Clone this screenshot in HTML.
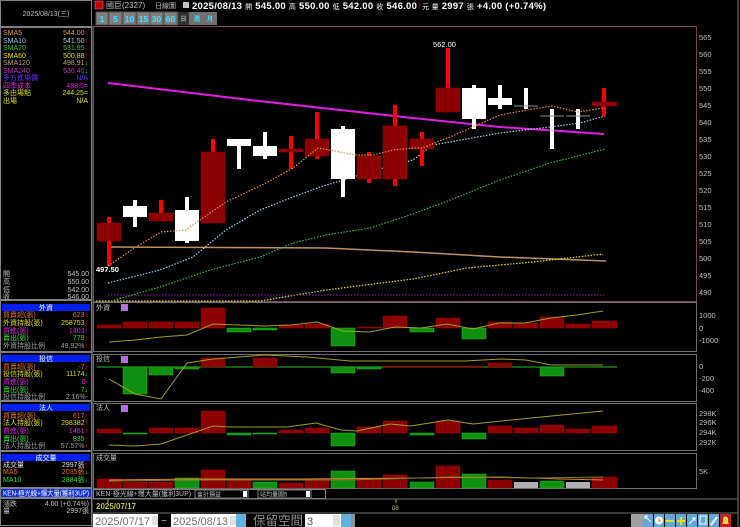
<!DOCTYPE html>
<html><head><meta charset="utf-8"><style>
html,body{margin:0;padding:0;background:#000;width:740px;height:527px;overflow:hidden}
svg{display:block}
text{font-family:"Liberation Sans","Noto Sans CJK TC",sans-serif}
.s{font-size:7px}
</style></head><body>
<svg width="740" height="527" viewBox="0 0 740 527" xmlns="http://www.w3.org/2000/svg">
<rect width="740" height="527" fill="#000"/>
<g fill="none" stroke="#808080" stroke-width="1">
<rect x="0.5" y="0.5" width="91" height="26"/>
<rect x="0.5" y="27.5" width="91" height="272"/>
<rect x="0.5" y="300.5" width="91" height="51"/>
<rect x="0.5" y="352.5" width="91" height="48"/>
<rect x="0.5" y="401.5" width="91" height="49"/>
<rect x="0.5" y="451.5" width="91" height="36"/>
<rect x="0.5" y="488.5" width="91" height="9"/>
<rect x="0.5" y="498.5" width="91" height="27"/>
</g>
<text x="46" y="16" fill="#c0c0c0" class="s" text-anchor="middle">2025/08/13(三)</text>
<g class="s">
<text x="3" y="35" fill="#e0a040">SMA5</text><text x="88" y="35" fill="#e0a040" text-anchor="end">544.00<tspan fill="#f00">↑</tspan></text>
<text x="3" y="43" fill="#a0c8e8">SMA10</text><text x="88" y="43" fill="#a0c8e8" text-anchor="end">541.50<tspan fill="#f00">↑</tspan></text>
<text x="3" y="50" fill="#30c030">SMA20</text><text x="88" y="50" fill="#30c030" text-anchor="end">531.95<tspan fill="#f00">↑</tspan></text>
<text x="3" y="58" fill="#e0e000">SMA60</text><text x="88" y="58" fill="#e0e000" text-anchor="end">500.88<tspan fill="#f00">↑</tspan></text>
<text x="3" y="65" fill="#c0a080">SMA120</text><text x="88" y="65" fill="#c0a080" text-anchor="end">498.91<tspan fill="#0f0">↓</tspan></text>
<text x="3" y="73" fill="#c030c0">SMA240</text><text x="88" y="73" fill="#c030c0" text-anchor="end">536.40<tspan fill="#0f0">↓</tspan></text>
<text x="3" y="80" fill="#6030ff">多方進場價</text><text x="88" y="80" fill="#6030ff" text-anchor="end">N/A</text>
<text x="3" y="88" fill="#e020e0">四季成本</text><text x="88" y="88" fill="#e020e0" text-anchor="end">488.5=</text>
<text x="3" y="95" fill="#e0e000">多由場點</text><text x="88" y="95" fill="#e0e000" text-anchor="end">244.25=</text>
<text x="3" y="103" fill="#e0e000">出場</text><text x="88" y="103" fill="#e0e000" text-anchor="end">N/A</text>

<text x="3" y="276" fill="#c0c0c0">開</text><text x="89" y="276" fill="#c0c0c0" text-anchor="end">545.00</text>
<text x="3" y="284" fill="#c0c0c0">高</text><text x="89" y="284" fill="#c0c0c0" text-anchor="end">550.00</text>
<text x="3" y="292" fill="#c0c0c0">低</text><text x="89" y="292" fill="#c0c0c0" text-anchor="end">542.00</text>
<text x="3" y="299" fill="#c0c0c0">收</text><text x="89" y="299" fill="#c0c0c0" text-anchor="end">546.00</text>

<rect x="2" y="304" width="88" height="7" fill="#0020f0"/><text x="46" y="310" fill="#fff" text-anchor="middle">外資</text>
<text x="3" y="317" fill="#e07030">買賣超(張)</text><text x="88" y="317" fill="#e07030" text-anchor="end">623<tspan fill="#f00">↑</tspan></text>
<text x="3" y="325" fill="#e0e000">外資持股(張)</text><text x="88" y="325" fill="#e0e000" text-anchor="end">258753<tspan fill="#f00">↑</tspan></text>
<text x="3" y="333" fill="#e020e0">買進(張)</text><text x="88" y="333" fill="#e020e0" text-anchor="end">1403<tspan fill="#f00">↑</tspan></text>
<text x="3" y="340" fill="#30e030">賣出(張)</text><text x="88" y="340" fill="#30e030" text-anchor="end">779<tspan fill="#f00">↑</tspan></text>
<text x="3" y="348" fill="#a0a0a0">外資持股比例</text><text x="88" y="348" fill="#a0a0a0" text-anchor="end">49.92%<tspan fill="#f00">↑</tspan></text>

<rect x="2" y="355" width="88" height="7" fill="#0020f0"/><text x="46" y="361" fill="#fff" text-anchor="middle">投信</text>
<text x="3" y="369" fill="#e07030">買賣超(張)</text><text x="88" y="369" fill="#e07030" text-anchor="end">-7<tspan fill="#f00">↑</tspan></text>
<text x="3" y="376" fill="#e0e000">投信持股(張)</text><text x="88" y="376" fill="#e0e000" text-anchor="end">11174<tspan fill="#0f0">↓</tspan></text>
<text x="3" y="384" fill="#e020e0">買進(張)</text><text x="88" y="384" fill="#e020e0" text-anchor="end">0-</text>
<text x="3" y="392" fill="#30e030">賣出(張)</text><text x="88" y="392" fill="#30e030" text-anchor="end">7<tspan fill="#0f0">↓</tspan></text>
<text x="3" y="399" fill="#a0a0a0">投信持股比例</text><text x="88" y="399" fill="#a0a0a0" text-anchor="end">2.16%-</text>

<rect x="2" y="404" width="88" height="7" fill="#0020f0"/><text x="46" y="410" fill="#fff" text-anchor="middle">法人</text>
<text x="3" y="418" fill="#e07030">買賣超(張)</text><text x="88" y="418" fill="#e07030" text-anchor="end">617<tspan fill="#f00">↑</tspan></text>
<text x="3" y="425" fill="#e0e000">法人持股(張)</text><text x="88" y="425" fill="#e0e000" text-anchor="end">298382<tspan fill="#f00">↑</tspan></text>
<text x="3" y="433" fill="#e020e0">買進(張)</text><text x="88" y="433" fill="#e020e0" text-anchor="end">1481<tspan fill="#f00">↑</tspan></text>
<text x="3" y="441" fill="#30e030">賣出(張)</text><text x="88" y="441" fill="#30e030" text-anchor="end">835<tspan fill="#f00">↑</tspan></text>
<text x="3" y="448" fill="#a0a0a0">法人持股比例</text><text x="88" y="448" fill="#a0a0a0" text-anchor="end">57.57%<tspan fill="#f00">↑</tspan></text>

<rect x="2" y="454" width="88" height="7" fill="#0020f0"/><text x="46" y="460" fill="#fff" text-anchor="middle">成交量</text>
<text x="3" y="467" fill="#e0e0e0">成交量</text><text x="88" y="467" fill="#e0e0e0" text-anchor="end">2997張<tspan fill="#f00">↑</tspan></text>
<text x="3" y="474" fill="#e07030">MA5</text><text x="88" y="474" fill="#e07030" text-anchor="end">2035張<tspan fill="#0f0">↓</tspan></text>
<text x="3" y="482" fill="#30e030">MA10</text><text x="88" y="482" fill="#30e030" text-anchor="end">2884張<tspan fill="#0f0">↓</tspan></text>

<rect x="1" y="489" width="90" height="8" fill="#1030e0"/><text x="3" y="495.5" fill="#fff" textLength="86" lengthAdjust="spacingAndGlyphs">KEN-極光線+爆大量(獲利3UP)</text>
<text x="3" y="506" fill="#c0c0c0">漲跌</text><text x="89" y="506" fill="#c0c0c0" text-anchor="end">4.00 (+0.74%)</text>
<text x="3" y="513" fill="#c0c0c0">量</text><text x="89" y="513" fill="#c0c0c0" text-anchor="end">2997張</text>
</g>

<rect x="95" y="1" width="8" height="8" fill="#c00000" stroke="#f88" stroke-width="0.5"/>
<text x="106" y="8" fill="#c0c0c0" style="font-size:8px">國巨(2327)</text>
<text x="155" y="8" fill="#c0c0c0" style="font-size:7px">日線圖</text>
<rect x="183" y="2" width="6" height="6" fill="#c0c0c0"/>
<text x="192" y="9" fill="#fff" style="font-size:9.5px;font-weight:bold" textLength="354" lengthAdjust="spacing">2025/08/13 <tspan style="font-size:7px;font-weight:normal">開</tspan> 545.00 <tspan style="font-size:7px;font-weight:normal">高</tspan> 550.00 <tspan style="font-size:7px;font-weight:normal">低</tspan> 542.00 <tspan style="font-size:7px;font-weight:normal">收</tspan> 546.00<tspan fill="#f00">↑</tspan><tspan style="font-size:7px;font-weight:normal">元  量</tspan> 2997 <tspan style="font-size:7px;font-weight:normal">張</tspan>  +4.00 (+0.74%)</text>
<rect x="96" y="12" width="121" height="13" fill="#707070"/>
<g fill="#40e0ff" style="font-size:8.5px;font-weight:bold" text-anchor="middle">
<rect x="96" y="12" width="12" height="13" fill="#808080" stroke="#555"/>
<rect x="109" y="12" width="13" height="13" fill="#808080" stroke="#555"/>
<rect x="123" y="12" width="13" height="13" fill="#808080" stroke="#555"/>
<rect x="137" y="12" width="13" height="13" fill="#808080" stroke="#555"/>
<rect x="150" y="12" width="13" height="13" fill="#808080" stroke="#555"/>
<rect x="164" y="12" width="13" height="13" fill="#808080" stroke="#555"/>
<rect x="178" y="12" width="11" height="13" fill="#303030"/>
<text x="102" y="22">1</text><text x="115.5" y="22">5</text><text x="129.5" y="22">10</text><text x="143.5" y="22">15</text><text x="156.5" y="22">30</text><text x="170.5" y="22">60</text>
<text x="183.5" y="21" fill="#aaa" style="font-size:6px">日</text><text x="197" y="21" style="font-size:6px">週</text><text x="210" y="21" style="font-size:6px">月</text>
</g>

<rect x="93.5" y="26.5" width="603" height="275" fill="none" stroke="#804060"/>
<line x1="92" y1="26" x2="92" y2="527" stroke="#808080"/>
<line x1="738" y1="0" x2="738" y2="527" stroke="#808080"/>
<g fill="#c0c0c0" style="font-size:7.5px">
<text x="699" y="40">565</text><text x="699" y="57">560</text><text x="699" y="74">555</text><text x="699" y="91">550</text><text x="699" y="108">545</text><text x="699" y="125">540</text><text x="699" y="142">535</text><text x="699" y="159">530</text><text x="699" y="176">525</text><text x="699" y="193">520</text><text x="699" y="210">515</text><text x="699" y="227">510</text><text x="699" y="244">505</text><text x="699" y="261">500</text><text x="699" y="278">495</text><text x="699" y="295">490</text>
</g>

<polyline fill="none" stroke="#e020e0" stroke-width="2" points="108,83 250,100 413,118 500,127 560,131 604,134"/>
<polyline fill="none" stroke="#c09060" stroke-width="1.5" points="108,247 326,248 413,252 500,257 606,261"/>
<polyline fill="none" stroke="#e0e020" stroke-width="1.2" stroke-dasharray="1.5,1.5" points="96,301 260,301 326,290 413,279 467,268 533,262 603,254"/>
<line x1="108" y1="295" x2="604" y2="295" stroke="#a020c0" stroke-dasharray="1.5,1.5"/>
<polyline fill="none" stroke="#30c030" stroke-width="1.2" stroke-dasharray="1.5,1.5" points="108,302 160,287 210,270 260,257 293,243 326,235 370,228 413,214 450,200 500,180 550,163 605,149"/>
<polyline fill="none" stroke="#a0d0f0" stroke-width="1.2" stroke-dasharray="1.5,1.5" points="108,283 160,270 193,257 226,230 260,210 293,197 320,187 343,180 376,170 413,160 433,145 450,142 500,133 550,127 580,123 605,116"/>

<g>
<g fill="#f00">
<rect x="107" y="217" width="4" height="49"/>
<rect x="159" y="200" width="4" height="21"/>
<rect x="211" y="139" width="4" height="84"/>
<rect x="289" y="136" width="4" height="33"/>
<rect x="315" y="112" width="4" height="47"/>
<rect x="367" y="152" width="4" height="31"/>
<rect x="393" y="105" width="4" height="81"/>
<rect x="420" y="132" width="4" height="34"/>
<rect x="446" y="48" width="4" height="64"/>
<rect x="602" y="88" width="4" height="28"/>
</g>
<g fill="#8b0000" stroke="#a00000" stroke-width="0.5">
<rect x="97" y="223" width="24" height="18"/>
<rect x="149" y="213" width="24" height="8"/>
<rect x="201" y="152" width="24" height="71"/>
<rect x="279" y="149" width="24" height="3"/>
<rect x="305" y="139" width="24" height="17"/>
<rect x="357" y="156" width="24" height="23"/>
<rect x="383" y="126" width="24" height="53"/>
<rect x="410" y="139" width="24" height="10"/>
<rect x="436" y="88" width="24" height="24"/>
<rect x="592" y="102" width="25" height="4"/>
</g>
<g fill="#fff">
<rect x="133" y="200" width="4" height="27"/><rect x="123" y="206" width="24" height="11"/>
<rect x="185" y="197" width="4" height="46"/><rect x="175" y="210" width="24" height="31"/>
<rect x="237" y="139" width="4" height="30"/><rect x="227" y="139" width="24" height="7"/>
<rect x="263" y="132" width="4" height="27"/><rect x="253" y="146" width="24" height="10"/>
<rect x="341" y="126" width="4" height="71"/><rect x="331" y="129" width="24" height="50"/>
<rect x="472" y="85" width="4" height="44"/><rect x="462" y="88" width="24" height="31"/>
<rect x="498" y="85" width="4" height="24"/><rect x="488" y="98" width="24" height="7"/>
<rect x="524" y="88" width="4" height="21"/>
<rect x="550" y="109" width="4" height="40"/>
<rect x="576" y="109" width="4" height="20"/>
</g>
<g stroke="#909090" stroke-width="1"><line x1="514" y1="106" x2="538" y2="106"/><line x1="540" y1="116" x2="564" y2="116"/><line x1="566" y1="116" x2="590" y2="116"/></g>
<polyline fill="none" stroke="#f09030" stroke-width="1.2" stroke-dasharray="1.5,1.5" points="108,266 136,247 161,232 186,230 200,220 226,202 266,183 293,168 318,148 356,155 373,155 393,150 413,148 422,148 450,137 473,127 500,115 527,110 552,106 578,112 603,108"/>
<text x="96" y="272" fill="#fff" style="font-size:7.5px;font-weight:bold">497.50</text>
<text x="433" y="47" fill="#fff" style="font-size:7.5px">562.00</text>
</g>

<g fill="none" stroke="#707070">
<rect x="93.5" y="302.5" width="603" height="49"/>
<rect x="93.5" y="354.5" width="603" height="47"/>
<rect x="93.5" y="403.5" width="603" height="47"/>
<rect x="93.5" y="453.5" width="603" height="35"/>
</g>
<g fill="#c0c0c0" class="s">
<text x="96" y="310">外資</text><text x="96" y="361">投信</text><text x="96" y="410">法人</text><text x="96" y="460">成交量</text>
</g>
<g fill="#b070e0"><rect x="121" y="304" width="7" height="7"/><rect x="121" y="356" width="7" height="7"/><rect x="121" y="405" width="7" height="7"/></g>
<g fill="#c0c0c0" style="font-size:7.5px">
<text x="699" y="318">1000</text><text x="699" y="331">0</text><text x="699" y="343">-1000</text>
<text x="699" y="369">0</text><text x="699" y="381">-200</text><text x="699" y="393">-400</text>
<text x="699" y="416">298K</text><text x="699" y="425">296K</text><text x="699" y="435">294K</text><text x="699" y="445">292K</text>
<text x="699" y="474">5K</text>
</g>

<g fill="#8b0000" stroke="#b00000" stroke-width="0.5">
<rect x="97" y="325" width="24" height="3"/><rect x="123" y="322" width="24" height="6"/><rect x="149" y="322" width="24" height="6"/><rect x="175" y="322" width="24" height="6"/><rect x="201" y="308" width="24" height="20"/>
<rect x="279" y="325" width="24" height="3"/><rect x="305" y="324" width="24" height="4"/><rect x="357" y="327" width="24" height="1"/><rect x="383" y="316" width="24" height="12"/><rect x="436" y="318" width="24" height="10"/>
<rect x="488" y="322" width="24" height="6"/><rect x="514" y="323" width="24" height="5"/><rect x="540" y="317" width="24" height="11"/><rect x="566" y="324" width="24" height="4"/><rect x="592" y="321" width="25" height="7"/>
</g>
<g fill="#109010" stroke="#20c020" stroke-width="0.5">
<rect x="227" y="328" width="24" height="4"/><rect x="253" y="328" width="24" height="2"/><rect x="331" y="328" width="24" height="18"/><rect x="410" y="328" width="24" height="4"/><rect x="462" y="328" width="24" height="11"/>
</g>
<polyline fill="none" stroke="#a0a020" points="109,342 135,340 161,337 187,335 213,324 239,325 265,326 291,325 317,322 343,331 369,332 395,327 421,328 447,324 473,329 499,323 525,323 551,318 577,315 603,311"/>

<line x1="97" y1="367" x2="617" y2="367" stroke="#20c020"/>
<g fill="#109010" stroke="#20c020" stroke-width="0.5">
<rect x="123" y="367" width="24" height="27"/><rect x="149" y="367" width="24" height="8"/><rect x="175" y="367" width="24" height="2"/><rect x="331" y="367" width="24" height="6"/><rect x="357" y="367" width="24" height="2"/><rect x="540" y="367" width="24" height="9"/>
</g>
<g fill="#8b0000" stroke="#b00000" stroke-width="0.5">
<rect x="201" y="358" width="24" height="9"/><rect x="253" y="358" width="24" height="9"/><rect x="383" y="366" width="100" height="1"/><rect x="488" y="363" width="24" height="4"/>
</g>
<polyline fill="none" stroke="#a0a020" points="109,379 135,394 161,399 187,363 213,359 265,355 307,357 350,361 465,361 501,359 526,360 551,365 603,365"/>

<g fill="#8b0000" stroke="#b00000" stroke-width="0.5">
<rect x="97" y="429" width="24" height="4"/><rect x="149" y="428" width="24" height="5"/><rect x="175" y="428" width="24" height="5"/><rect x="201" y="411" width="24" height="22"/>
<rect x="279" y="430" width="24" height="3"/><rect x="305" y="428" width="24" height="5"/><rect x="357" y="427" width="24" height="6"/><rect x="383" y="421" width="24" height="12"/><rect x="436" y="421" width="24" height="12"/>
<rect x="488" y="426" width="24" height="7"/><rect x="514" y="428" width="24" height="5"/><rect x="540" y="425" width="24" height="8"/><rect x="566" y="429" width="24" height="4"/><rect x="592" y="426" width="25" height="7"/>
</g>
<g fill="#109010" stroke="#20c020" stroke-width="0.5">
<rect x="123" y="433" width="24" height="1"/><rect x="227" y="433" width="24" height="2"/><rect x="253" y="433" width="24" height="1"/><rect x="331" y="433" width="24" height="13"/><rect x="410" y="433" width="24" height="2"/><rect x="462" y="433" width="24" height="6"/>
</g>
<polyline fill="none" stroke="#a0a020" points="109,445 135,446 161,444 213,426 229,427 287,427 316,423 341,430 357,431 390,424 411,426 448,420 473,424 531,418 603,411"/>

<g fill="#8b0000" stroke="#b00000" stroke-width="0.5">
<rect x="97" y="479" width="24" height="9"/><rect x="123" y="482" width="24" height="6"/><rect x="149" y="482" width="24" height="6"/><rect x="201" y="470" width="24" height="18"/><rect x="227" y="480" width="24" height="8"/>
<rect x="279" y="483" width="24" height="5"/><rect x="305" y="479" width="24" height="9"/><rect x="357" y="478" width="24" height="10"/><rect x="383" y="475" width="24" height="13"/><rect x="436" y="466" width="24" height="22"/>
<rect x="488" y="480" width="24" height="8"/><rect x="592" y="477" width="25" height="11"/>
</g>
<g fill="#109010" stroke="#20c020" stroke-width="0.5">
<rect x="175" y="478" width="24" height="10"/><rect x="253" y="482" width="24" height="6"/><rect x="331" y="471" width="24" height="17"/><rect x="410" y="482" width="24" height="6"/><rect x="462" y="474" width="24" height="14"/><rect x="540" y="481" width="24" height="7"/>
</g>
<g fill="#b0b0b0"><rect x="514" y="482" width="24" height="6"/><rect x="566" y="482" width="24" height="6"/></g>
<polyline fill="none" stroke="#e08030" points="109,480 200,479 300,479 420,478 500,477 560,479 603,480"/>
<polyline fill="none" stroke="#808020" points="109,481 200,480 350,480 450,477 540,478 603,477"/>

<line x1="93" y1="499" x2="737" y2="499" stroke="#707070"/>
<text x="96" y="496" fill="#c0c0c0" class="s">KEN-極光線+爆大量(獲利3UP)</text>
<rect x="195" y="490" width="53" height="8" fill="#000" stroke="#808080"/><text x="197" y="496.5" fill="#c0c0c0" style="font-size:6px">會計損益</text><rect x="243" y="491" width="4" height="6" fill="#fff"/>
<rect x="258" y="490" width="53" height="8" fill="#000" stroke="#808080"/><text x="260" y="496.5" fill="#c0c0c0" style="font-size:6px">站均量圖5</text><rect x="306" y="491" width="4" height="6" fill="#fff"/>
<rect x="93.5" y="489.5" width="232" height="9" fill="none" stroke="#808080"/>
<line x1="108" y1="499" x2="108" y2="503" stroke="#c0c000"/>
<text x="96" y="509" fill="#c0c040" style="font-size:8px;font-weight:bold">2025/07/17</text>
<line x1="396" y1="499" x2="396" y2="503" stroke="#c0c000"/>
<text x="392" y="510" fill="#c0c040" style="font-size:6px">08</text>
<line x1="93" y1="513" x2="737" y2="513" stroke="#707070"/>
<rect x="93" y="514" width="65" height="13" fill="#fff"/><text x="95" y="525" fill="#707070" style="font-size:11px">2025/07/17</text><rect x="152" y="516" width="6" height="9" fill="#e0e0e0"/>
<text x="161" y="524" fill="#c0c0c0" style="font-size:10px">~</text>
<rect x="171" y="514" width="65" height="13" fill="#fff"/><text x="173" y="525" fill="#707070" style="font-size:11px">2025/08/13</text><rect x="230" y="516" width="6" height="9" fill="#e0e0e0"/>
<rect x="236" y="514" width="10" height="13" fill="#60b0e0"/>
<text x="253" y="525" fill="#909090" style="font-size:12.5px">保留空間</text>
<rect x="305" y="514" width="36" height="13" fill="#fff"/><text x="307" y="525" fill="#505050" style="font-size:11px">3</text><rect x="333" y="515" width="7" height="11" fill="#e0e0e0"/>
<rect x="341" y="514" width="10" height="13" fill="#60b0e0"/><rect x="351" y="514" width="4" height="13" fill="#909090"/>
<rect x="631" y="514" width="12" height="13" fill="#a0a0a0"/>
<g fill="#60a8d8">
<rect x="643" y="514" width="10" height="13"/><rect x="654" y="514" width="10" height="13"/><rect x="665" y="514" width="10" height="13"/><rect x="676" y="514" width="10" height="13"/><rect x="687" y="514" width="10" height="13"/><rect x="698" y="514" width="10" height="13"/><rect x="709" y="514" width="10" height="13"/>
</g>
<rect x="720" y="514" width="11" height="13" fill="#c02020"/>
<circle cx="659" cy="520.5" r="4" fill="#fff"/><path d="M659 518v3h2" stroke="#e08000" fill="none"/>
<rect x="666" y="520" width="8" height="2" fill="#f0e000"/>
<rect x="677" y="520" width="8" height="2" fill="#f0e000"/><rect x="680" y="517" width="2" height="8" fill="#f0e000"/>
<path d="M645 516l6 6M645 516h3M645 516v3" stroke="#fff" fill="none"/>
<path d="M689 524l6-6M692 518h3v3" stroke="#fff" fill="none"/>
<path d="M700 516h6v8h-6z" stroke="#fff" fill="none"/>
<path d="M711 525l6-8" stroke="#fff" stroke-width="2"/>
<path d="M722 524h7l-1-2v-3a2.5 2.5 0 0 0-5 0v3z" fill="#f8d050"/>
</svg>
</body></html>
